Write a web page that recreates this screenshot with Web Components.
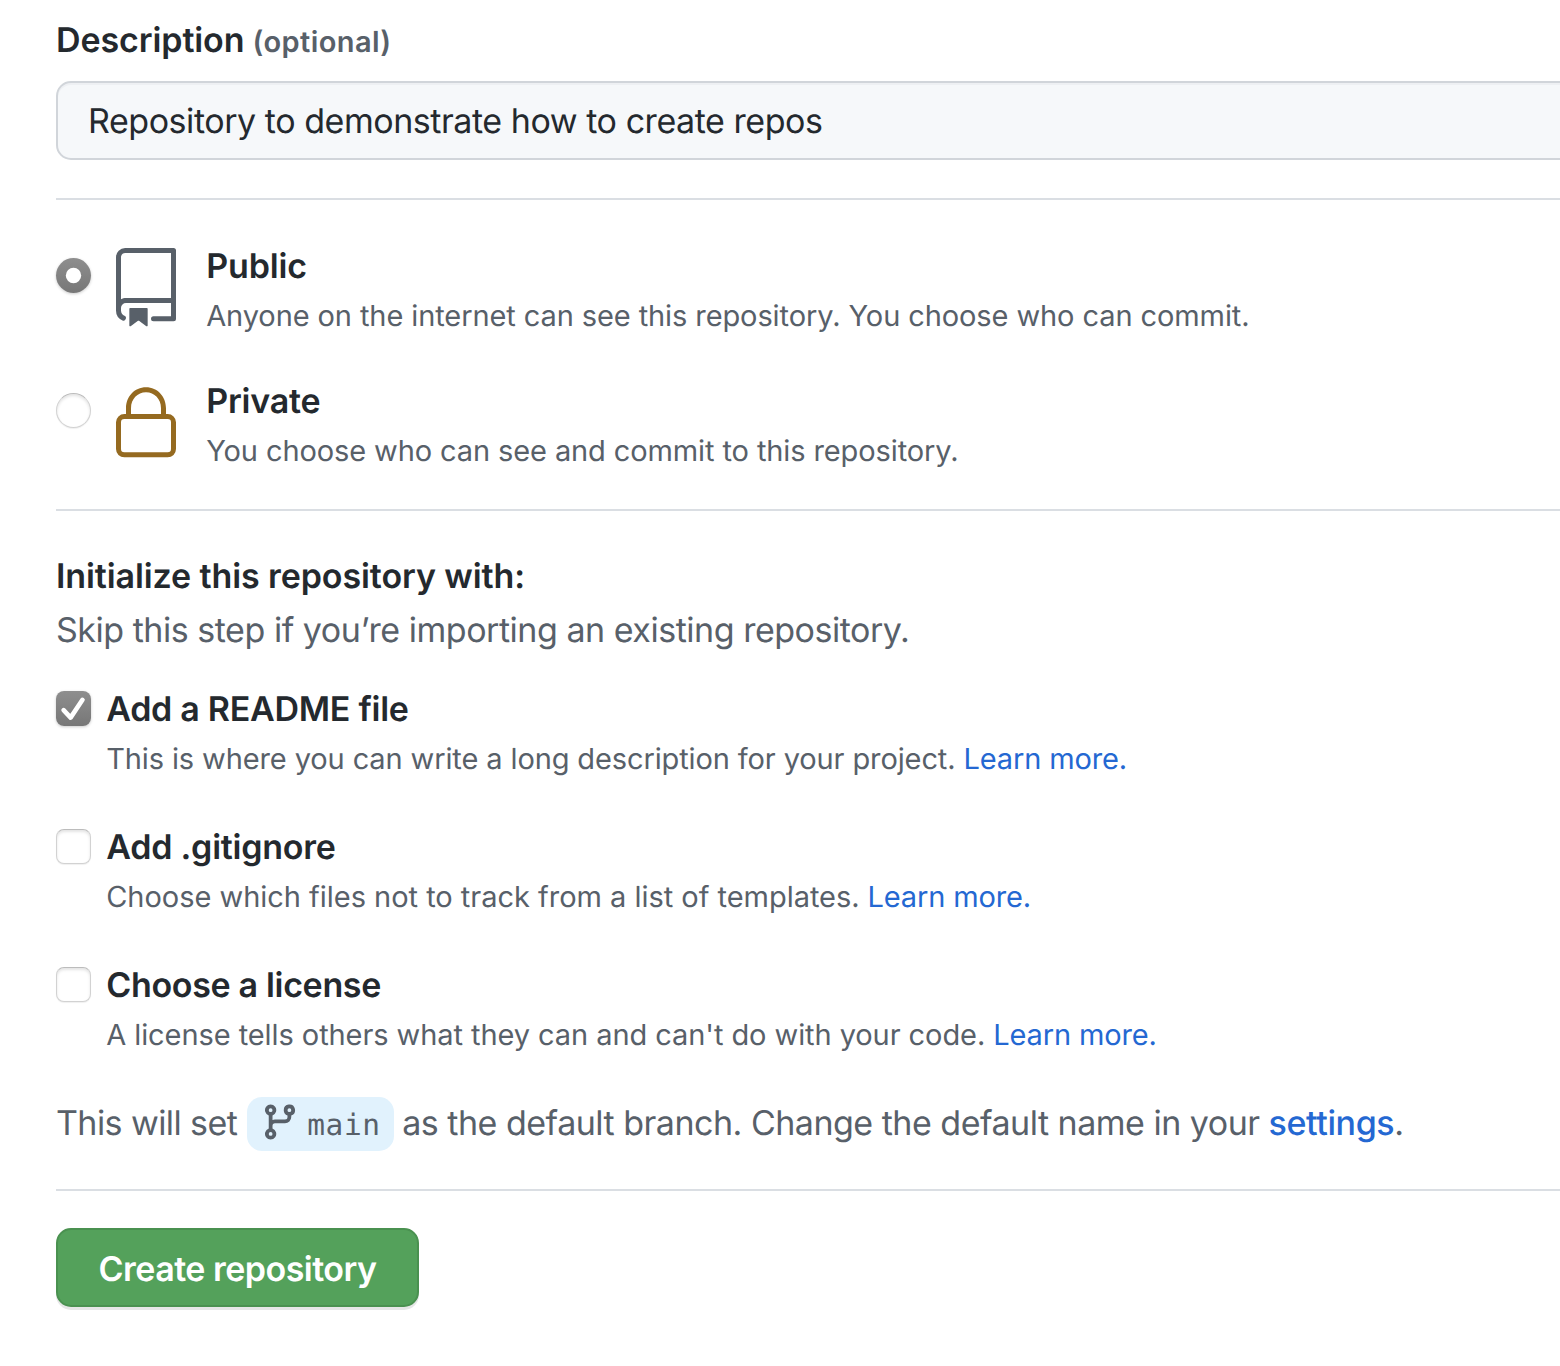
<!DOCTYPE html>
<html lang="en"><head><meta charset="utf-8"><title>Create repository</title>
<style>
body{margin:0;background:#fff;font-family:Inter,"Liberation Sans",sans-serif;color:#24292e;overflow:hidden;text-rendering:geometricPrecision}
</style></head><body>
<repo-form></repo-form>
<script>
const define=(name,html)=>customElements.define(name,class extends HTMLElement{
  constructor(){super();this.attachShadow({mode:'open'}).innerHTML=html;}
});
define('form-rule',`<style>:host{display:block;height:2px;background:#dadee3}</style>`);
define('text-field',`<style>:host{display:flex;align-items:center;box-sizing:border-box;height:79px;margin-right:-40px;padding:2px 30px 0;border:2px solid #d1d5da;border-radius:15px;background:#f6f8fa;box-shadow:inset 0 2px 0 #eef0f3;font-size:34px;white-space:nowrap}</style><slot></slot>`);
define('choice-mark',`<style>
:host{display:block;box-sizing:border-box;flex:none;width:35px;height:35px;border:1px solid #d2d2d2;border-top-color:#bcbcbc;border-radius:8px;background:#fff;box-shadow:inset 0 2px 3px #e4e4e4,0 1px 1px #f0f0f0}
:host([round]){border-radius:50%}
:host([checked]){border:0;background:linear-gradient(#8e8e8e,#777);box-shadow:0 1px 3px #ccc}
svg{display:none}
:host([checked]) svg{display:block}
:host([round]) .tick,:host(:not([round])) .dot{display:none}
</style><svg width="35" height="35" viewBox="0 0 35 35"><circle class="dot" cx="17.5" cy="17.5" r="7.7" fill="#fff"/><path class="tick" d="M7.6 19.2L14.6 26.6L26.5 8.8" fill="none" stroke="#fff" stroke-width="4.6" stroke-linecap="round" stroke-linejoin="round"/></svg>`);
define('repo-icon',`<style>:host{display:block;color:#586069}svg{display:block}</style><svg width="80" height="80" viewBox="0 0 24 24" fill="currentColor"><path fill-rule="evenodd" d="M3 2.75A2.75 2.75 0 015.75 0h14.5a.75.75 0 01.75.75v20.5a.75.75 0 01-.75.75h-6a.75.75 0 010-1.5h5.25v-4H6A1.5 1.5 0 004.5 18v.75c0 .716.43 1.334 1.05 1.605a.75.75 0 01-.6 1.374A3.25 3.25 0 013 18.75v-16zM19.5 1.5V15H6c-.546 0-1.059.146-1.5.401V2.75c0-.69.56-1.25 1.25-1.25H19.5z"/><path d="M7 18.25a.25.25 0 01.25-.25h5a.25.25 0 01.25.25v5.01a.25.25 0 01-.397.201l-2.206-1.604a.25.25 0 00-.294 0L7.397 23.46a.25.25 0 01-.397-.2v-5.01z"/></svg>`);
define('lock-icon',`<style>:host{display:block;color:#956a20}svg{display:block}</style><svg width="80" height="80" viewBox="0 0 24 24" fill="currentColor"><path fill-rule="evenodd" d="M6 9V7.25C6 3.845 8.503 1 12 1s6 2.845 6 6.25V9h.5a2.5 2.5 0 012.5 2.5v8a2.5 2.5 0 01-2.5 2.5h-13A2.5 2.5 0 013 19.5v-8A2.5 2.5 0 015.5 9H6zm1.5-1.75C7.5 4.58 9.422 2.5 12 2.5c2.578 0 4.5 2.08 4.5 4.75V9h-9V7.25zm-2 3.25a1 1 0 00-1 1v8a1 1 0 001 1h13a1 1 0 001-1v-8a1 1 0 00-1-1h-13z"/></svg>`);
define('choice-text',`<style>:host{display:flex;flex-direction:column;white-space:nowrap;margin-left:-.8px}.t{font-size:34px;font-weight:600;line-height:52px}.d{display:flex;gap:8px;margin-top:-2px;font-size:29px;line-height:50px;color:#586069}</style><div class="t"><slot name="title"></slot></div><div class="d"><slot></slot></div>`);
define('branch-tag',`<style>:host{display:flex;box-sizing:border-box;width:147px;height:54px;padding:5px 0 0 13px;gap:7px;background:#e1f2fd;border-radius:15px;font:29.5px/46px "DejaVu Sans Mono","Liberation Mono",monospace}svg{display:block;flex:none}</style><svg width="40" height="40" viewBox="0 0 16 16" fill="currentColor"><path fill-rule="evenodd" d="M11.75 2.5a.75.75 0 100 1.5.75.75 0 000-1.5zm-2.25.75a2.25 2.25 0 113 2.122V6A2.5 2.5 0 0110 8.5H6a1 1 0 00-1 1v1.128a2.251 2.251 0 11-1.5 0V5.372a2.25 2.25 0 111.5 0v1.836A2.492 2.492 0 016 7h4a1 1 0 001-1v-.628A2.25 2.25 0 019.5 3.25zM4.25 12a.75.75 0 100 1.5.75.75 0 000-1.5zM3.5 3.25a.75.75 0 111.5 0 .75.75 0 01-1.5 0z"/></svg><slot></slot>`);
define('submit-button',`<style>:host{display:flex;align-items:center;justify-content:center;box-sizing:border-box;width:363px;height:79px;padding-top:3px;border:2px solid #4a9150;border-radius:15px;background:#54a15b;box-shadow:0 3px 0 #e6e7e7;color:#fff;font-size:34px;font-weight:600;white-space:nowrap}</style><slot></slot>`);
define('repo-form',`<style>
:host{display:flex;flex-direction:column;padding:16px 0 0 56px;height:1366px;box-sizing:border-box;white-space:nowrap}
span,a{display:inline-block}
a{color:#2468d2;text-decoration:none;letter-spacing:-.14px}
.label{display:flex;align-items:baseline;gap:8px;height:65px;line-height:50px;font-size:34px;font-weight:600}
.label .o{font-size:29px;color:#586069}
.row{display:flex}
.row lock-icon,.row repo-icon{margin:7px 21px 0 15px}
.row lock-icon{margin-top:8px}
.row choice-mark{margin-top:17px}
.row.checks choice-mark{margin:7px 16px 0 0}
.h{font-size:34px;font-weight:600;line-height:54px}
.s{font-size:34px;line-height:54px;color:#586069}
.public{margin-top:41px;height:135px}.private{height:133px}
.intro{margin-top:39px;height:134px}
.checks{height:138px}.checks.last{height:137px}
.branch{display:flex;height:92px;font-size:34px;line-height:54px;color:#586069}
.branch branch-tag{margin:0 8px 0 10px}
.branch .end{margin-left:9px}
</style>
<div class="label"><span style="letter-spacing:-.1px">Description</span><span class="o" style="letter-spacing:.42px">(optional)</span></div>
<text-field><span style="letter-spacing:-.452px">Repository to demonstrate how to create repos</span></text-field>
<form-rule style="margin-top:38px"></form-rule>
<div class="row public"><choice-mark round checked></choice-mark><repo-icon></repo-icon><choice-text><span slot="title" style="letter-spacing:-.15px">Public</span><span style="letter-spacing:-.096px">Anyone on the internet can see this repository. You choose who can commit.</span></choice-text></div>
<div class="row private"><choice-mark round></choice-mark><lock-icon></lock-icon><choice-text><span slot="title" style="letter-spacing:-.2px">Private</span><span style="letter-spacing:-.107px">You choose who can see and commit to this repository.</span></choice-text></div>
<form-rule></form-rule>
<div class="intro"><div class="h"><span style="letter-spacing:-.1px">Initialize this repository with:</span></div><div class="s"><span style="letter-spacing:-.473px">Skip this step if you’re importing an existing repository.</span></div></div>
<div class="row checks"><choice-mark checked></choice-mark><choice-text><span slot="title" style="letter-spacing:-.28px">Add a README file</span><span style="letter-spacing:-.118px">This is where you can write a long description for your project.</span><a>Learn more.</a></choice-text></div>
<div class="row checks"><choice-mark></choice-mark><choice-text><span slot="title" style="letter-spacing:-.23px">Add .gitignore</span><span style="letter-spacing:-.026px">Choose which files not to track from a list of templates.</span><a>Learn more.</a></choice-text></div>
<div class="row checks last"><choice-mark></choice-mark><choice-text><span slot="title" style="letter-spacing:-.326px">Choose a license</span><span style="letter-spacing:-.075px">A license tells others what they can and can't do with your code.</span><a>Learn more.</a></choice-text></div>
<div class="branch"><span style="letter-spacing:-.58px">This will set</span><branch-tag><span style="letter-spacing:.6px">main</span></branch-tag><span style="letter-spacing:-.503px">as the default branch. Change the default name in your</span><span class="end"><a style="letter-spacing:-.4px;font-weight:500">settings</a>.</span></div>
<form-rule></form-rule>
<submit-button style="margin-top:37px"><span style="letter-spacing:-.52px">Create repository</span></submit-button>`);
</script></body></html>
